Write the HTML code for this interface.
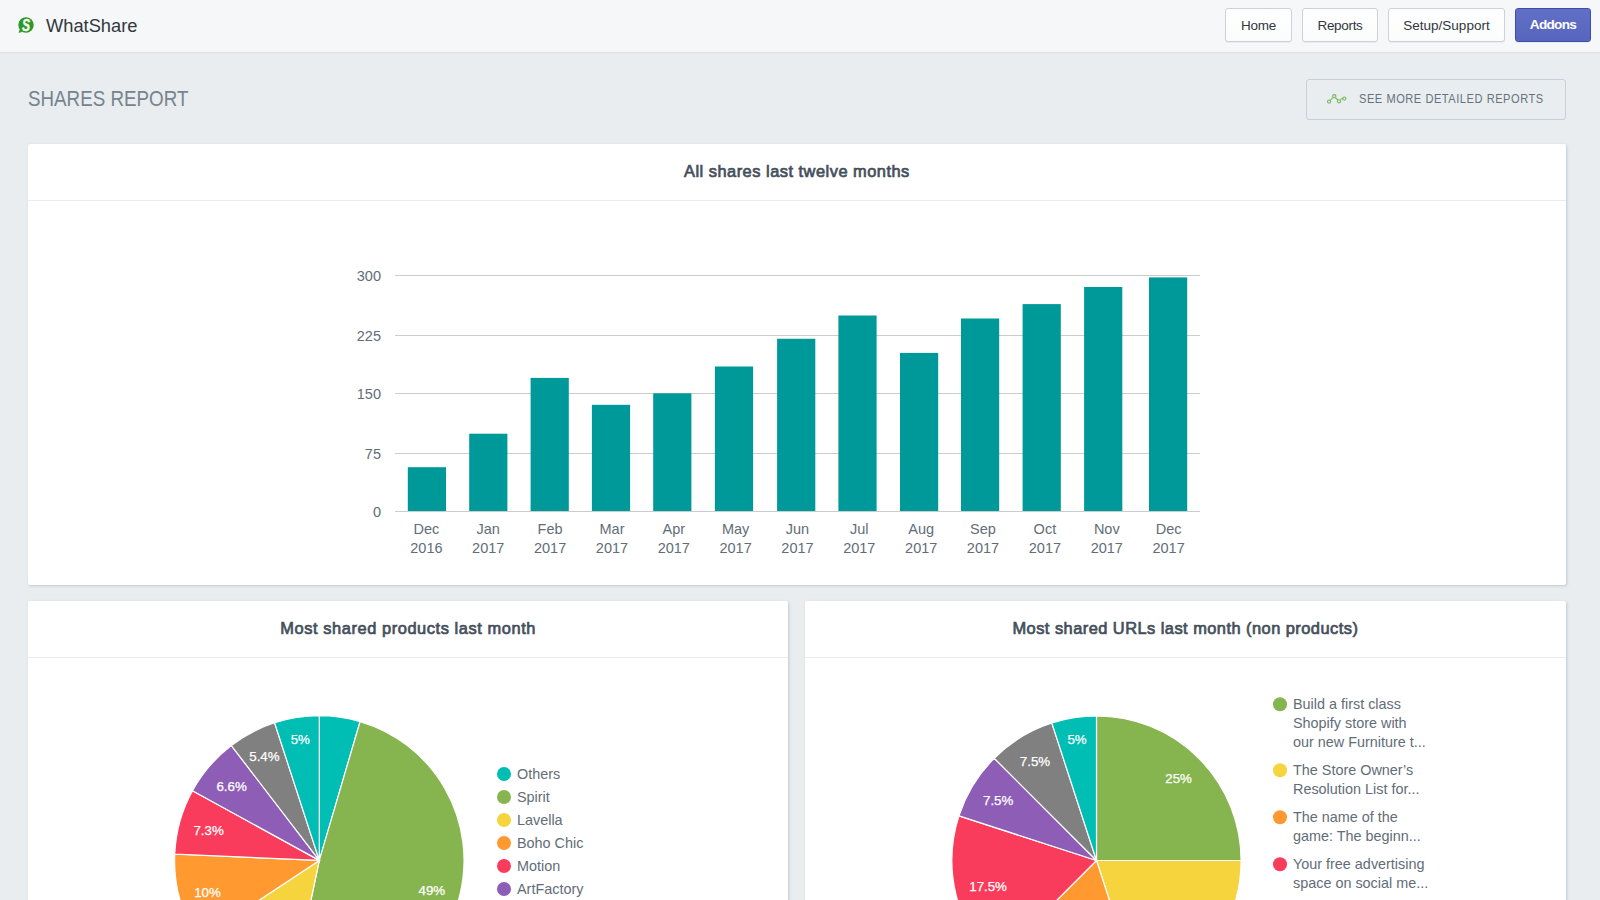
<!DOCTYPE html>
<html>
<head>
<meta charset="utf-8">
<title>WhatShare - Shares Report</title>
<style>
*{box-sizing:border-box;margin:0;padding:0}
html,body{width:1600px;height:900px;overflow:hidden}
body{background:#e9edf0;font-family:"Liberation Sans",sans-serif;position:relative;color:#31373d}
.abs{position:absolute}
#topbar{position:absolute;left:0;top:0;width:1600px;height:53px;background:#f6f7f9;border-bottom:1px solid #dde1e4}
#brand{position:absolute;left:46px;top:14.4px;font-size:18.3px;line-height:24px;color:#32383e;white-space:nowrap}
.btn{position:absolute;top:8px;height:34px;border:1px solid #cdd2d6;border-radius:3px;background:linear-gradient(#fff,#fbfcfc);font-size:13.5px;line-height:33px;text-align:center;color:#31373d;box-shadow:0 1px 0 rgba(22,29,37,.05);white-space:nowrap}
.btn.primary{background:linear-gradient(#6170c5,#5765be);border-color:#3e4eaa;color:#fff;font-weight:bold;font-size:13.6px;letter-spacing:-.72px;line-height:32px}
#pagetitle{position:absolute;left:28px;top:85.8px;font-size:22.2px;line-height:26px;color:#77838d;white-space:nowrap;transform-origin:0 0;transform:scaleX(.8465)}
#morebtn{position:absolute;left:1305.5px;top:78.5px;width:260px;height:41px;border:1.2px solid #c8d0d6;border-radius:3px;background:#e9edf0}
#morebtn span{position:absolute;left:52px;top:0;line-height:39.4px;font-size:12.4px;letter-spacing:.6px;color:#66727c;white-space:nowrap;transform-origin:0 50%;transform:scaleX(.894)}
.card{position:absolute;background:#fff;border-radius:2px;box-shadow:1px 1px 3px rgba(55,68,80,.22)}
.card .hd{position:absolute;left:0;top:0;right:0;height:57px;border-bottom:1px solid #e9edf0;text-align:center;font-weight:normal;font-size:16.4px;line-height:54.6px;color:#454f5b;-webkit-text-stroke:.7px #454f5b;letter-spacing:.5px;white-space:nowrap}
svg text{font-family:"Liberation Sans",sans-serif}
</style>
</head>
<body>
<div id="topbar">
  <svg class="abs" style="left:16px;top:14.5px" width="22" height="22" viewBox="0 0 22 22">
    <path d="M3.6 14.6 L2.7 17.9 L6.4 16.8 Z" fill="#2f962a" stroke="#eefbee" stroke-width="1.2" stroke-linejoin="round"/>
    <circle cx="10" cy="10" r="8.2" fill="#eefbee"/>
    <circle cx="10" cy="10" r="7.7" fill="#2f962a"/>
    <path d="M3.6 14.6 L2.7 17.9 L6.4 16.8 Z" fill="#2f962a"/>
    <text transform="translate(10.1 15.6) scale(.8 1.06)" x="0" y="0" font-size="15.2" font-weight="bold" font-style="italic" fill="#f2fff0" stroke="#f2fff0" stroke-width=".35" text-anchor="middle">S</text>
  </svg>
  <div id="brand">WhatShare</div>
  <div class="btn" style="left:1225px;width:67px;letter-spacing:-.2px">Home</div>
  <div class="btn" style="left:1302px;width:76px;letter-spacing:-.33px">Reports</div>
  <div class="btn" style="left:1388px;width:117px">Setup/Support</div>
  <div class="btn primary" style="left:1515px;width:76px">Addons</div>
</div>

<div id="pagetitle">SHARES REPORT</div>
<div id="morebtn">
  <svg class="abs" style="left:19.2px;top:11px" width="24" height="16" viewBox="0 0 24 16">
    <g fill="none" stroke="#74ba57" stroke-width="1.1">
      <path d="M4.2 9.4 L6.9 6.5 M9.3 6.5 L11.8 9.1 M14.4 8.6 L16.9 7.3"/>
      <circle cx="3.1" cy="10.6" r="1.6"/><circle cx="8.3" cy="5.2" r="1.6"/><circle cx="13" cy="10.3" r="1.6"/><circle cx="18.3" cy="7.6" r="1.6"/>
    </g>
  </svg>
  <span>SEE MORE DETAILED REPORTS</span>
</div>

<!-- CARD 1 -->
<div class="card" id="c1" style="left:28px;top:144px;width:1537.8px;height:441.2px">
  <div class="hd">All shares last twelve months</div>
</div>
<!-- CARD 2 -->
<div class="card" id="c2" style="left:28px;top:601px;width:760.3px;height:320px">
  <div class="hd" style="letter-spacing:.58px">Most shared products last month</div>
</div>
<!-- CARD 3 -->
<div class="card" id="c3" style="left:805px;top:601px;width:760.8px;height:320px">
  <div class="hd" style="letter-spacing:.47px">Most shared URLs last month (non products)</div>
</div>

<!--CHARTS-->
<svg class="abs" style="left:0;top:0" width="1600" height="900" viewBox="0 0 1600 900">
<rect x="395" y="275.0" width="805" height="1" fill="#cccccc"/>
<rect x="395" y="335.0" width="805" height="1" fill="#cccccc"/>
<rect x="395" y="393.0" width="805" height="1" fill="#cccccc"/>
<rect x="395" y="453.0" width="805" height="1" fill="#cccccc"/>
<rect x="395" y="511.0" width="805" height="1" fill="#cccccc"/>
<rect x="407.8" y="467.2" width="38.2" height="43.80" fill="#009999"/>
<rect x="469.2" y="433.7" width="38.2" height="77.30" fill="#009999"/>
<rect x="530.6" y="377.9" width="38.2" height="133.10" fill="#009999"/>
<rect x="591.9" y="404.8" width="38.2" height="106.20" fill="#009999"/>
<rect x="653.2" y="393.3" width="38.2" height="117.70" fill="#009999"/>
<rect x="714.9" y="366.5" width="38.2" height="144.50" fill="#009999"/>
<rect x="777.1" y="338.75" width="38.2" height="172.25" fill="#009999"/>
<rect x="838.4" y="315.5" width="38.2" height="195.50" fill="#009999"/>
<rect x="900" y="352.9" width="38.2" height="158.10" fill="#009999"/>
<rect x="961" y="318.5" width="38.2" height="192.50" fill="#009999"/>
<rect x="1022.6" y="304.1" width="38.2" height="206.90" fill="#009999"/>
<rect x="1084.1" y="287" width="38.2" height="224.00" fill="#009999"/>
<rect x="1149" y="277.4" width="38.2" height="233.60" fill="#009999"/>
<g font-size="14.5" fill="#626d78" text-anchor="end">
<text x="381" y="280.7">300</text>
<text x="381" y="340.7">225</text>
<text x="381" y="398.7">150</text>
<text x="381" y="458.7">75</text>
<text x="381" y="516.7">0</text>
</g>
<g font-size="14.5" fill="#626d78" text-anchor="middle">
<text x="426.4" y="533.5">Dec</text><text x="426.4" y="552.5">2016</text>
<text x="488.2" y="533.5">Jan</text><text x="488.2" y="552.5">2017</text>
<text x="550.1" y="533.5">Feb</text><text x="550.1" y="552.5">2017</text>
<text x="612.0" y="533.5">Mar</text><text x="612.0" y="552.5">2017</text>
<text x="673.8" y="533.5">Apr</text><text x="673.8" y="552.5">2017</text>
<text x="735.6" y="533.5">May</text><text x="735.6" y="552.5">2017</text>
<text x="797.5" y="533.5">Jun</text><text x="797.5" y="552.5">2017</text>
<text x="859.3" y="533.5">Jul</text><text x="859.3" y="552.5">2017</text>
<text x="921.2" y="533.5">Aug</text><text x="921.2" y="552.5">2017</text>
<text x="983.0" y="533.5">Sep</text><text x="983.0" y="552.5">2017</text>
<text x="1044.9" y="533.5">Oct</text><text x="1044.9" y="552.5">2017</text>
<text x="1106.8" y="533.5">Nov</text><text x="1106.8" y="552.5">2017</text>
<text x="1168.6" y="533.5">Dec</text><text x="1168.6" y="552.5">2017</text>
</g>
<path d="M319.3,860.4 L319.30,715.70 A144.7,144.7 0 0 1 360.11,721.57 Z" fill="#00beb4" stroke="#ffffff" stroke-width="1.2"/>
<path d="M319.3,860.4 L360.11,721.57 A144.7,144.7 0 0 1 289.51,1002.00 Z" fill="#86b550" stroke="#ffffff" stroke-width="1.2"/>
<path d="M319.3,860.4 L289.51,1002.00 A144.7,144.7 0 0 1 198.61,940.22 Z" fill="#f5d43e" stroke="#ffffff" stroke-width="1.2"/>
<path d="M319.3,860.4 L198.61,940.22 A144.7,144.7 0 0 1 174.74,854.04 Z" fill="#ff9930" stroke="#ffffff" stroke-width="1.2"/>
<path d="M319.3,860.4 L174.74,854.04 A144.7,144.7 0 0 1 192.50,790.69 Z" fill="#fa3c5c" stroke="#ffffff" stroke-width="1.2"/>
<path d="M319.3,860.4 L192.50,790.69 A144.7,144.7 0 0 1 231.33,745.51 Z" fill="#8e5eb6" stroke="#ffffff" stroke-width="1.2"/>
<path d="M319.3,860.4 L231.33,745.51 A144.7,144.7 0 0 1 274.59,722.78 Z" fill="#808080" stroke="#ffffff" stroke-width="1.2"/>
<path d="M319.3,860.4 L274.59,722.78 A144.7,144.7 0 0 1 319.30,715.70 Z" fill="#00beb4" stroke="#ffffff" stroke-width="1.2"/>
<g font-size="13.3" fill="#ffffff" stroke="#ffffff" stroke-width=".25" text-anchor="middle">
<text x="431.9" y="894.7">49%</text>
<text x="207.5" y="897.2">10%</text>
<text x="208.6" y="835.3">7.3%</text>
<text x="231.6" y="791.0">6.6%</text>
<text x="264.4" y="761.1">5.4%</text>
<text x="300.3" y="743.9">5%</text>
</g>
<path d="M1096.5,860.5 L1096.50,715.90 A144.6,144.6 0 0 1 1241.10,860.50 Z" fill="#86b550" stroke="#ffffff" stroke-width="1.2"/>
<path d="M1096.5,860.5 L1241.10,860.50 A144.6,144.6 0 0 1 1141.18,998.02 Z" fill="#f5d43e" stroke="#ffffff" stroke-width="1.2"/>
<path d="M1096.5,860.5 L1141.18,998.02 A144.6,144.6 0 0 1 994.25,962.75 Z" fill="#ff9930" stroke="#ffffff" stroke-width="1.2"/>
<path d="M1096.5,860.5 L994.25,962.75 A144.6,144.6 0 0 1 958.98,815.82 Z" fill="#fa3c5c" stroke="#ffffff" stroke-width="1.2"/>
<path d="M1096.5,860.5 L958.98,815.82 A144.6,144.6 0 0 1 994.25,758.25 Z" fill="#8e5eb6" stroke="#ffffff" stroke-width="1.2"/>
<path d="M1096.5,860.5 L994.25,758.25 A144.6,144.6 0 0 1 1051.82,722.98 Z" fill="#808080" stroke="#ffffff" stroke-width="1.2"/>
<path d="M1096.5,860.5 L1051.82,722.98 A144.6,144.6 0 0 1 1096.50,715.90 Z" fill="#00beb4" stroke="#ffffff" stroke-width="1.2"/>
<g font-size="13.3" fill="#ffffff" stroke="#ffffff" stroke-width=".25" text-anchor="middle">
<text x="1178.6" y="783.3">25%</text>
<text x="988.1" y="891.3">17.5%</text>
<text x="998.2" y="805.4">7.5%</text>
<text x="1035.0" y="765.7">7.5%</text>
<text x="1077.0" y="743.6">5%</text>
</g>
<g font-size="14.4" fill="#626d78">
<circle cx="504" cy="774.0" r="7" fill="#00beb4"/><text x="517" y="779.0">Others</text>
<circle cx="504" cy="797.0" r="7" fill="#86b550"/><text x="517" y="802.0">Spirit</text>
<circle cx="504" cy="820.0" r="7" fill="#f5d43e"/><text x="517" y="825.0">Lavella</text>
<circle cx="504" cy="843.0" r="7" fill="#ff9930"/><text x="517" y="848.0">Boho Chic</text>
<circle cx="504" cy="866.0" r="7" fill="#fa3c5c"/><text x="517" y="871.0">Motion</text>
<circle cx="504" cy="889.0" r="7" fill="#8e5eb6"/><text x="517" y="894.0">ArtFactory</text>
<circle cx="504" cy="912.0" r="7" fill="#808080"/><text x="517" y="917.0">Classic</text>
<circle cx="1280" cy="704.3" r="7" fill="#86b550"/>
<text x="1293" y="709.3">Build a first class</text>
<text x="1293" y="728.3">Shopify store with</text>
<text x="1293" y="747.3">our new Furniture t...</text>
<circle cx="1280" cy="770.3" r="7" fill="#f5d43e"/>
<text x="1293" y="775.3">The Store Owner’s</text>
<text x="1293" y="794.3">Resolution List for...</text>
<circle cx="1280" cy="817.3" r="7" fill="#ff9930"/>
<text x="1293" y="822.3">The name of the</text>
<text x="1293" y="841.3">game: The beginn...</text>
<circle cx="1280" cy="864.3" r="7" fill="#fa3c5c"/>
<text x="1293" y="869.3">Your free advertising</text>
<text x="1293" y="888.3">space on social me...</text>
</g>
</svg>
<!--/CHARTS-->
</body>
</html>
